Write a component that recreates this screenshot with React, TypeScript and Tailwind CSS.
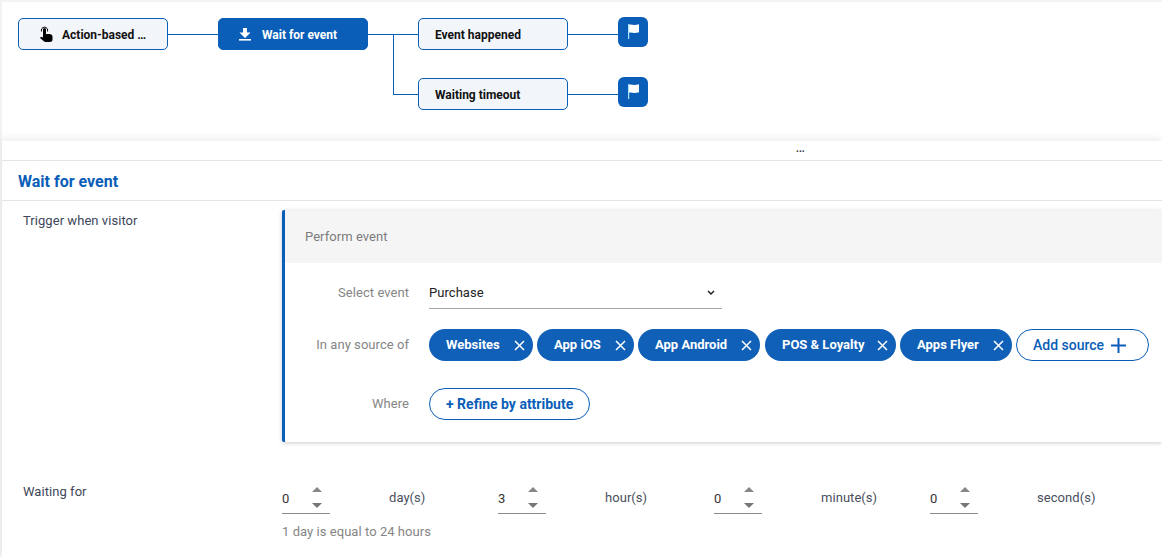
import React from "react";

function Node({ x, y, label, active, icon, pad }: { x: number; y: number; label: string; active?: boolean; icon?: React.ReactNode; pad: string }) {
  return (
    <div
      style={{ left: x, top: y }}
      className={`absolute w-[150px] h-[32px] rounded-[5px] border border-[#0a5eb8] flex items-center text-[12px] font-bold pt-[1px] ${pad} ${active ? "bg-[#0a5eb8] text-white" : "bg-[#f2f6fb] text-[#111]"}`}
    >
      {icon}
      <span>{label}</span>
    </div>
  );
}

function Line({ x, y, w, h }: { x: number; y: number; w: number; h: number }) {
  return <div style={{ left: x, top: y, width: w, height: h }} className="absolute bg-[#0a5eb8]" />;
}

function Flag({ x, y }: { x: number; y: number }) {
  return (
    <div style={{ left: x, top: y }} className="absolute w-[30px] h-[30px] rounded-[6px] bg-[#0a5eb8] flex items-center justify-center">
      <svg width="11" height="15" viewBox="0 0 11 15" className="-mt-[1px]">
        <path d="M1 .8C3 .2 4.5 1 6.5 1 8 1 9.5.8 11 .3V8.2C9.5 8.7 8 8.9 6.5 8.9 4.5 8.9 3 8.2 1 8.7z" fill="#fff" />
        <rect x="0" y="0" width="1.2" height="15" fill="#a8e6f7" />
      </svg>
    </div>
  );
}

function Chip({ label, w }: { label: string; w: string }) {
  return (
    <div className={`h-[32px] ${w} shrink-0 rounded-full bg-[#1160b8] text-white flex items-center justify-between pl-[17px] pr-[8px] text-[13px] font-bold`}>
      <span>{label}</span>
      <svg width="11" height="11" viewBox="0 0 11 11" stroke="#fff" strokeWidth="1.5" fill="none">
        <path d="M1 1l9 9M10 1l-9 9" />
      </svg>
    </div>
  );
}

function Num({ value, label }: { value: string; label: string }) {
  return (
    <div className="w-[216px] shrink-0 flex items-start">
      <div className="w-[48px] h-[36px] border-b border-[#8a8a8a] relative text-[13px] leading-[18px] text-[#333] pt-[12px]">
        <span>{value}</span>
        <svg className="absolute left-[30px] top-[9px]" width="10" height="5" viewBox="0 0 10 5"><path d="M5 0l5 5H0z" fill="#888" /></svg>
        <svg className="absolute left-[30px] top-[25px]" width="10" height="5" viewBox="0 0 10 5"><path d="M0 0h10L5 5z" fill="#777" /></svg>
      </div>
      <div className="ml-[59px] text-[13px] text-[#4a4f5c] pt-[11px] leading-[18px] tracking-[0.05px]">{label}</div>
    </div>
  );
}

function Label({ children }: { children: React.ReactNode }) {
  return <div className="w-[124px] mr-[20px] shrink-0 text-right text-[13px] text-[#858585] tracking-[0.05px]">{children}</div>;
}

export default function App() {
  return (
    <div className="w-[1162px] h-[557px] overflow-hidden pl-[2px] pt-[2px] bg-[#f3f3f3] font-['Roboto',sans-serif]">
      <div className="bg-white h-[555px] flex flex-col">
        <div className="relative h-[139px] shrink-0">
          <div className="absolute -left-[2px] -top-[2px] w-[700px] h-[139px]">
            <Line x={168} y={34} w={50} h={1} />
            <Line x={368} y={34} w={50} h={1} />
            <Line x={393} y={34} w={1} h={61} />
            <Line x={393} y={94} w={25} h={1} />
            <Line x={568} y={34} w={50} h={1} />
            <Line x={568} y={94} w={50} h={1} />
            <Node
              x={18}
              y={18}
              label="Action-based …"
              pad="pl-[20px]"
              icon={
                <svg className="mr-[9px] -mt-[1px]" width="14" height="17" viewBox="0 0 14 17">
                  <path d="M4 8V3.5a1.5 1.5 0 013 0V8h3.5c1.5 0 3 1 3 2.5v3c0 1.8-1.2 2.5-3 2.5H6.5c-1 0-1.6-.5-2.2-1.2L1 12l1-1.2 2 .7z" fill="#000" />
                  <path d="M2.5 5.5a3.2 3.2 0 116 0" stroke="#000" strokeWidth="1" fill="none" />
                </svg>
              }
            />
            <Node
              x={218}
              y={18}
              label="Wait for event"
              active
              pad="pl-[20px]"
              icon={
                <svg className="mr-[11px] -mt-[1px]" width="12" height="13" viewBox="0 0 12 13">
                  <path d="M4 0h4v4.5h3.5L6 10 .5 4.5H4z" fill="#fff" />
                  <rect x="0" y="11" width="12" height="1.6" fill="#fff" />
                </svg>
              }
            />
            <Node x={418} y={18} label="Event happened" pad="pl-[16px]" />
            <Node x={418} y={78} label="Waiting timeout" pad="pl-[16px]" />
            <Flag x={618} y={17} />
            <Flag x={618} y={77} />
          </div>
        </div>

        <div className="flex-1 min-h-0 bg-white shadow-[0_-3px_8px_rgba(0,0,0,0.07)] flex flex-col">
          <div className="h-[20px] shrink-0 border-b border-[#e5e5e5] flex items-center pl-[794px]">
            <span className="text-[10px] font-bold leading-none text-[#333] -mt-[3px]">...</span>
          </div>

          <div className="h-[40px] shrink-0 border-b border-[#e5e5e5] flex items-center pl-[16px] pt-[2px] text-[16px] font-bold text-[#0a5eb8]">
            Wait for event
          </div>

          <div className="flex pt-[9px]">
            <div className="w-[280px] shrink-0 pl-[21px] pt-[1px] text-[13px] text-[#40465a] leading-[20px] tracking-[0.05px]">Trigger when visitor</div>
            <div className="flex-1 min-w-0 h-[232px] border-l-[3px] border-[#0a5eb8] rounded-l-[2px] shadow-[0_1px_4px_rgba(0,0,0,0.2)]">
              <div className="h-[53px] bg-[#f5f5f5] flex items-center pl-[20px] text-[13px] text-[#7b7b7b] tracking-[0.05px]">Perform event</div>
              <div className="flex items-center h-[46px] pt-[13px]">
                <Label>Select event</Label>
                <div className="w-[293px] h-[33px] border-b border-[#a5a5a5] flex items-center justify-between pr-[7px] text-[13px] text-[#222] tracking-[0.05px] pt-[1px]">
                  <span>Purchase</span>
                  <svg width="8" height="6" viewBox="0 0 8 6" stroke="#222" strokeWidth="1.5" fill="none"><path d="M1 1l3 3 3-3" /></svg>
                </div>
              </div>
              <div className="flex items-center h-[32px] mt-[20px]">
                <Label>In any source of</Label>
                <div className="flex items-center gap-[4px]">
                  <Chip label="Websites" w="w-[104px]" />
                  <Chip label="App iOS" w="w-[97px]" />
                  <Chip label="App Android" w="w-[122px]" />
                  <div className="w-px -ml-[4px]" />
                  <Chip label="POS & Loyalty" w="w-[131px]" />
                  <Chip label="Apps Flyer" w="w-[112px]" />
                  <div className="h-[32px] w-[133px] shrink-0 rounded-full border border-[#0a5eb8] flex items-center pl-[16px] gap-[7px] text-[14px] font-medium text-[#0a5eb8]">
                    <span>Add source</span>
                    <svg width="15" height="15" viewBox="0 0 15 15" stroke="#0a5eb8" strokeWidth="2"><path d="M7.5 0v15M0 7.5h15" /></svg>
                  </div>
                </div>
              </div>
              <div className="flex items-center h-[32px] mt-[27px]">
                <Label>Where</Label>
                <div className="h-[32px] w-[161px] rounded-full border border-[#0a5eb8] flex items-center pl-[16px] text-[14px] font-bold text-[#0a5eb8]">
                  + Refine by attribute
                </div>
              </div>
            </div>
          </div>

          <div className="flex mt-[40px]">
            <div className="w-[280px] shrink-0 pl-[21px] text-[13px] text-[#40465a] leading-[20px] tracking-[0.05px]">Waiting for</div>
            <div className="-mt-[4px]">
              <div className="flex">
                <Num value="0" label="day(s)" />
                <Num value="3" label="hour(s)" />
                <Num value="0" label="minute(s)" />
                <Num value="0" label="second(s)" />
              </div>
              <div className="mt-[9px] text-[13px] text-[#858585] leading-[18px] tracking-[0.05px]">1 day is equal to 24 hours</div>
            </div>
          </div>
        </div>
      </div>
    </div>
  );
}
